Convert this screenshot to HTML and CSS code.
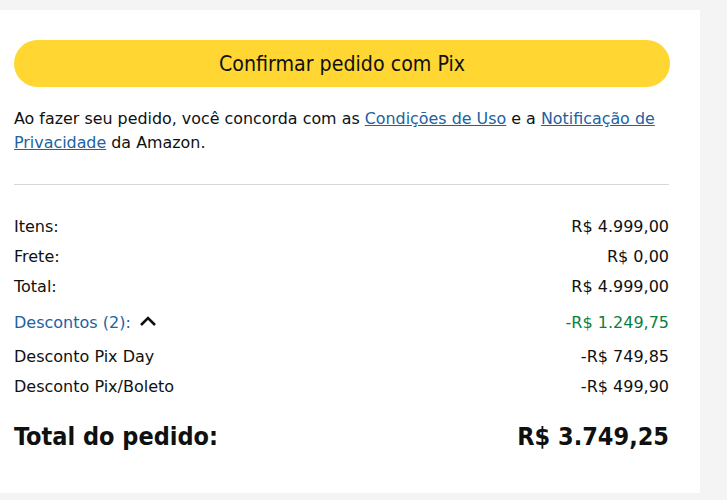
FILE: index.html
```html
<!DOCTYPE html>
<html lang="pt-BR">
<head>
<meta charset="utf-8">
<link rel="stylesheet" href="styles.css">
</head>
<body>
<div class="card">
  <button class="btn">Confirmar pedido com Pix</button>
  <p class="terms">Ao fazer seu pedido, você concorda com as <a href="#">Condições de Uso</a> e a <a href="#">Notificação de Privacidade</a> da Amazon.</p>
  <hr class="divider">
  <div class="rows">
    <div class="row"><span>Itens:</span><span>R$ 4.999,00</span></div>
    <div class="row"><span>Frete:</span><span>R$ 0,00</span></div>
    <div class="row"><span>Total:</span><span>R$ 4.999,00</span></div>
    <div class="row disc-head">
      <span class="disc-label">Descontos (2):
        <svg class="chev" width="18" height="12" viewBox="0 0 18 12"><path d="M2 10 L9 3 L16 10" fill="none" stroke="#0f1111" stroke-width="2.6"/></svg>
      </span>
      <span class="green">-R$ 1.249,75</span>
    </div>
    <div class="row sub first"><span>Desconto Pix Day</span><span>-R$ 749,85</span></div>
    <div class="row sub"><span>Desconto Pix/Boleto</span><span>-R$ 499,90</span></div>
  </div>
  <div class="grand"><span>Total do pedido:</span><span>R$ 3.749,25</span></div>
</div>
</body>
</html>
```
FILE: styles.css
```css
html, body {
  margin: 0;
  padding: 0;
}
body {
  background: #f4f4f4;
  font-family: "DejaVu Sans", "Noto Sans", sans-serif;
  color: #0f1111;
  width: 727px;
  height: 500px;
  overflow: hidden;
}
.card {
  background: #fff;
  width: 700px;
  height: 483px;
  margin-top: 10px;
  box-sizing: border-box;
  padding: 30px 31px 0 14px;
}
.btn {
  display: block;
  width: 656px;
  height: 47px;
  border: none;
  border-radius: 24px;
  background: #ffd632;
  font-family: "DejaVu Sans Condensed", "DejaVu Sans", sans-serif;
  font-size: 21.2px;
  color: #0f1111;
  padding: 0;
  margin: 0;
}
.terms {
  margin: 20px 0 0;
  font-size: 15.9px;
  line-height: 24px;
}
.terms a {
  color: #2162a1;
  text-decoration: underline;
}
.divider {
  border: none;
  border-top: 1px solid #d5d9d9;
  margin: 29px 0 0;
  height: 0;
}
.rows {
  margin-top: 32px;
  display: flex;
  flex-direction: column;
  gap: 10px;
  font-size: 16px;
  line-height: 20px;
}
.row {
  display: flex;
  justify-content: space-between;
  align-items: center;
}
.disc-head {
  margin-top: 6px;
}
.disc-label {
  color: #2162a1;
  display: flex;
  align-items: center;
  gap: 8px;
}
.chev {
  display: block;
  margin-top: -4px;
}
.green {
  color: #0a8040;
}
.sub.first {
  margin-top: 4px;
}
.grand {
  margin-top: 25px;
  display: flex;
  justify-content: space-between;
  font-family: "DejaVu Sans Condensed", "DejaVu Sans", sans-serif;
  font-weight: bold;
  font-size: 25px;
  line-height: 30px;
}
```
